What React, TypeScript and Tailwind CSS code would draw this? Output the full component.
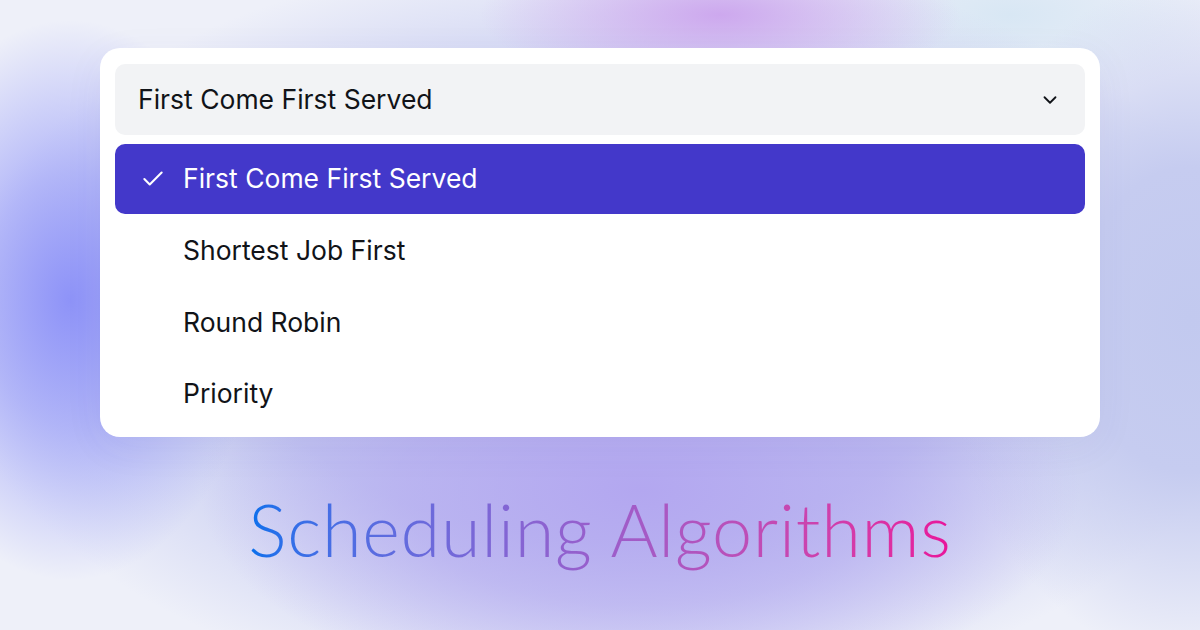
import { Check, ChevronDown } from "lucide-react";

const options = ["First Come First Served", "Shortest Job First", "Round Robin", "Priority"];

export default function App() {
  const selected = options[0];

  return (
    <div className="relative h-[630px] w-[1200px] overflow-hidden bg-[#eef0f9] font-['Inter',sans-serif]">
      {/* soft background glow */}
      <div className="absolute inset-0 bg-[radial-gradient(ellipse_240px_75px_at_720px_15px,#cda8ee_0%,rgba(205,168,238,0)_100%),radial-gradient(ellipse_190px_280px_at_70px_300px,#8e93f8_0%,rgba(142,147,248,0.6)_45%,rgba(142,147,248,0)_100%),radial-gradient(ellipse_440px_210px_at_640px_490px,#b3a7f0_0%,rgba(179,167,240,0.6)_55%,rgba(179,167,240,0)_100%),radial-gradient(ellipse_250px_340px_at_1190px_320px,#c2c9ef_0%,#c6ccf0_45%,rgba(198,204,240,0)_100%),radial-gradient(ellipse_660px_380px_at_610px_330px,#c2c7f2_0%,#c4c9f1_55%,rgba(196,201,241,0)_100%),radial-gradient(ellipse_220px_90px_at_1010px_15px,#d8e7f4_0%,rgba(216,231,244,0)_100%)]" />

      <div className="relative flex flex-col items-center pt-12">
        <div className="flex w-[1000px] flex-col rounded-[20px] bg-white px-[15px] pt-4 pb-[7px] shadow-[0_10px_40px_rgba(60,60,160,0.06)]">
          <div className="flex h-[71px] items-center justify-between rounded-[10px] bg-[#f2f3f5] pl-[23px] pr-[24px]">
            <span className="text-[26.5px] text-[#111318]">{selected}</span>
            <ChevronDown className="h-[22px] w-[22px] text-[#111318]" strokeWidth={2} />
          </div>

          <ul className="mt-[9px] flex flex-col">
            {options.map((option) => {
              const active = option === selected;
              return (
                <li
                  key={option}
                  className={
                    active
                      ? "mb-[1.5px] flex h-[70px] items-center rounded-[10px] bg-[#4338ca] pl-[25px] text-white"
                      : "flex h-[71.5px] items-center pl-[68px] text-[#111318]"
                  }
                >
                  {active && <Check className="mr-[17px] h-[26px] w-[26px]" strokeWidth={1.9} />}
                  <span className="text-[26.5px]">{option}</span>
                </li>
              );
            })}
          </ul>
        </div>

        <h1 className="mt-[47px] bg-gradient-to-r from-[#0070ec] via-[#9a5ecb] to-[#e9109a] bg-clip-text font-['Lato',sans-serif] text-[72px] leading-[90px] font-light tracking-[0.75px] text-transparent">
          Scheduling Algorithms
        </h1>
      </div>
    </div>
  );
}
